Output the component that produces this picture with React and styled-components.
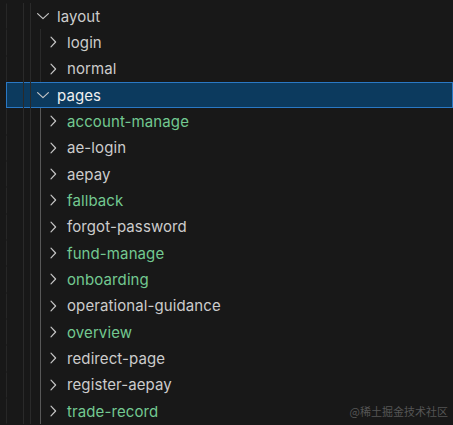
import React from "react";
import styled, { createGlobalStyle } from "styled-components";

const GlobalStyle = createGlobalStyle`
  html, body {
    margin: 0;
    padding: 0;
    background: #181818;
  }
  body {
    font-family: Inter, "Noto Sans", "Liberation Sans", sans-serif;
    -webkit-font-smoothing: antialiased;
  }
`;

const tree = [
  {
    name: "layout",
    open: true,
    children: [{ name: "login" }, { name: "normal" }],
  },
  {
    name: "pages",
    open: true,
    selected: true,
    children: [
      { name: "account-manage", added: true },
      { name: "ae-login" },
      { name: "aepay" },
      { name: "fallback", added: true },
      { name: "forgot-password" },
      { name: "fund-manage", added: true },
      { name: "onboarding", added: true },
      { name: "operational-guidance" },
      { name: "overview", added: true },
      { name: "redirect-page" },
      { name: "register-aepay" },
      { name: "trade-record", added: true },
    ],
  },
];

const Explorer = () => (
  <Panel>
    <GlobalStyle />
    <Tree>
      {tree.map(folder => (
        <React.Fragment key={folder.name}>
          <TreeRow item={folder} depth={0} />
          {folder.open &&
            folder.children.map(child => (
              <TreeRow
                key={child.name}
                item={child}
                depth={1}
                active={folder.selected}
              />
            ))}
        </React.Fragment>
      ))}
    </Tree>
    <Watermark>@稀土掘金技术社区</Watermark>
  </Panel>
);

const TreeRow = ({ item, depth, active }) => (
  <Row>
    <Lead />
    <Body $selected={item.selected}>
      <Rail $w={16} />
      <Rail $w={6} />
      {depth > 0 && <Rail $w={9} $active={active} />}
      <Twistie>
        {item.open ? <ChevronDown /> : <ChevronRight />}
      </Twistie>
      <Label $added={item.added} $selected={item.selected}>
        {item.name}
      </Label>
    </Body>
  </Row>
);

const ChevronRight = () => (
  <svg width="16" height="16" viewBox="0 0 16 16" fill="none">
    <path
      d="M6 3.2 L10.6 8 L6 12.8"
      stroke="#c5c5c5"
      strokeWidth="1.2"
      strokeLinecap="round"
      strokeLinejoin="round"
    />
  </svg>
);

const ChevronDown = () => (
  <svg width="16" height="16" viewBox="0 0 16 16" fill="none">
    <path
      d="M2.6 5.6 L8 10.6 L13.4 5.6"
      stroke="#c5c5c5"
      strokeWidth="1.2"
      strokeLinecap="round"
      strokeLinejoin="round"
    />
  </svg>
);

const Panel = styled.div`
  position: relative;
  width: 453px;
  height: 425px;
  overflow: hidden;
  background: #181818;
`;

const Tree = styled.div`
  display: flex;
  flex-direction: column;
  padding-top: 3px;
`;

const Row = styled.div`
  display: flex;
  height: 26.33px;
`;

const Lead = styled.div`
  width: 6px;
  flex: none;
`;

const Body = styled.div`
  flex: 1;
  display: flex;
  align-items: center;
  box-sizing: border-box;
  border: 1px solid ${p => (p.$selected ? "#2a78c4" : "transparent")};
  border-left-color: ${p => (p.$selected ? "#2a78c4" : "#272727")};
  background: ${p => (p.$selected ? "#0c3a5e" : "transparent")};
`;

const Rail = styled.span`
  flex: none;
  align-self: stretch;
  margin: -1px 0;
  width: ${p => p.$w}px;
  border-right: 1px solid
    ${p => (p.$active ? "#585858" : "#2a2a2a")};
`;

const Twistie = styled.span`
  flex: none;
  display: flex;
  width: 16px;
  height: 16px;
  margin-left: 4px;
`;

const Label = styled.span`
  margin-left: 6px;
  font-size: 15px;
  letter-spacing: 0.1px;
  white-space: nowrap;
  color: ${p => (p.$added ? "#73c991" : p.$selected ? "#f0f0f0" : "#cccccc")};
`;

const Watermark = styled.div`
  position: absolute;
  right: 5px;
  bottom: 6px;
  font-family: "Noto Sans CJK SC", sans-serif;
  font-size: 11px;
  color: #555555;
`;

export default Explorer;
